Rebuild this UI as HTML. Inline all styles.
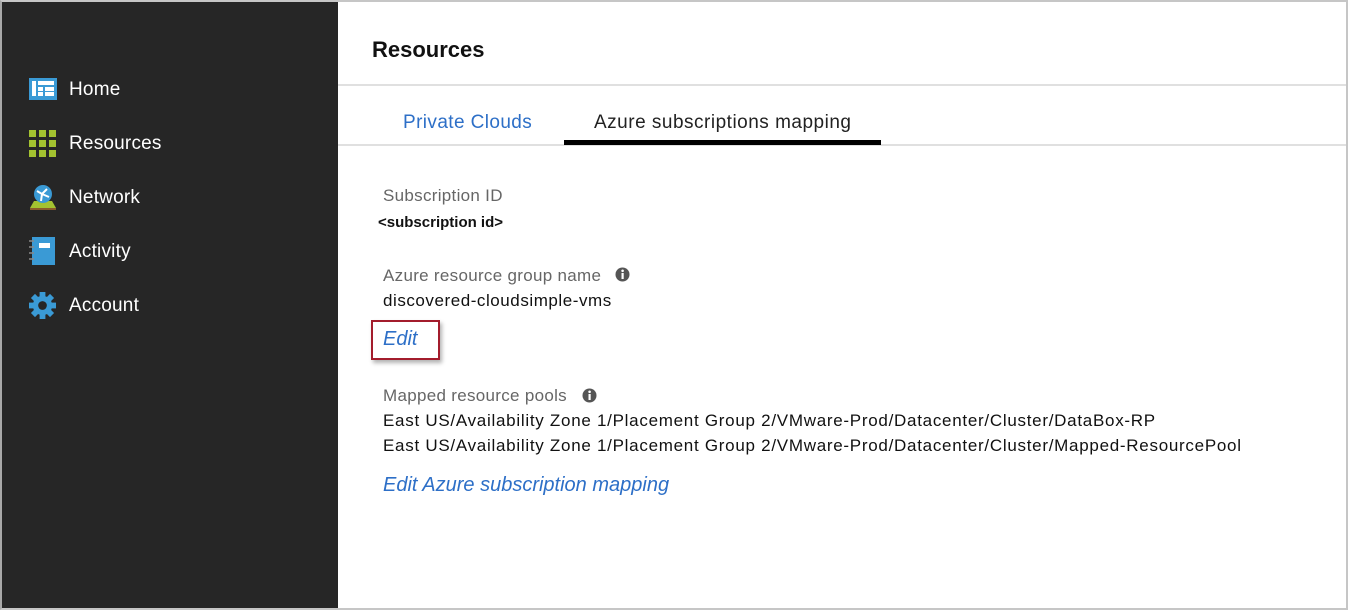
<!DOCTYPE html>
<html><head><style>
*{margin:0;padding:0;box-sizing:border-box}
body{width:1348px;height:610px;overflow:hidden;background:#fff;font-family:"Liberation Sans",sans-serif;position:relative}
.frame{position:absolute;left:0;top:0;width:1348px;height:610px;border:2px solid #c6c6c6;border-left-color:#a8a8a8;pointer-events:none}
.side{position:absolute;left:2px;top:2px;width:336px;height:606px;background:#262626}
.nav{position:absolute;left:69px;color:#fff;font-size:19px;letter-spacing:0.2px}
.ic{position:absolute;left:29px}
.t{position:absolute;white-space:nowrap}
</style></head><body>
<div class="side"></div>
<svg class="ic" style="top:78px" width="28" height="22"><rect width="28" height="22" fill="#3a9ad5"/><rect x="3" y="3" width="4" height="15" fill="#fff"/><rect x="9" y="3" width="16" height="4" fill="#fff"/><rect x="9" y="9" width="5" height="4" fill="#fff"/><rect x="16" y="9" width="9" height="4" fill="#fff"/><rect x="9" y="14" width="5" height="4" fill="#fff"/><rect x="16" y="14" width="9" height="4" fill="#fff"/></svg>
<div class="nav t" style="top:79px">Home</div>
<svg class="ic" style="top:130px" width="27" height="27" fill="#a3c230"><rect x="0" y="0" width="7" height="7"/><rect x="10" y="0" width="7" height="7"/><rect x="20" y="0" width="7" height="7"/><rect x="0" y="10" width="7" height="7"/><rect x="10" y="10" width="7" height="7"/><rect x="20" y="10" width="7" height="7"/><rect x="0" y="20" width="7" height="7"/><rect x="10" y="20" width="7" height="7"/><rect x="20" y="20" width="7" height="7"/></svg>
<div class="nav t" style="top:133px">Resources</div>
<svg class="ic" style="top:183px" width="28" height="27"><polygon points="5,18 23,18 27,25 1,25" fill="#a3c230"/><rect x="1" y="25" width="26" height="2" fill="#8a5a2a"/><circle cx="14" cy="11" r="9" fill="#3a9ad5"/><path d="M8 8 L13 11 L18 6 M13 11 L12 18 M13 11 L20 14" stroke="#fff" stroke-width="2" fill="none"/></svg>
<div class="nav t" style="top:187px">Network</div>
<svg class="ic" style="top:237px" width="27" height="28"><rect x="3" y="0" width="23" height="28" fill="#3a9ad5"/><rect x="10" y="6" width="11" height="5" fill="#fff"/><g stroke="#888" stroke-width="1.5"><line x1="0" y1="4" x2="5" y2="4"/><line x1="0" y1="10" x2="5" y2="10"/><line x1="0" y1="16" x2="5" y2="16"/><line x1="0" y1="22" x2="5" y2="22"/></g></svg>
<div class="nav t" style="top:241px">Activity</div>
<svg class="ic" style="top:292px" width="27" height="27" viewBox="-14 -14 28 28"><g fill="#3a9ad5"><circle r="10"/><g id="tt"><rect x="-3" y="-14" width="6" height="6"/></g><use href="#tt" transform="rotate(45)"/><use href="#tt" transform="rotate(90)"/><use href="#tt" transform="rotate(135)"/><use href="#tt" transform="rotate(180)"/><use href="#tt" transform="rotate(225)"/><use href="#tt" transform="rotate(270)"/><use href="#tt" transform="rotate(315)"/></g><circle r="4.5" fill="#262626"/></svg>
<div class="nav t" style="top:295px">Account</div>

<div class="t" style="left:372px;top:37px;font-size:22px;font-weight:bold;color:#111">Resources</div>
<div style="position:absolute;left:338px;top:84px;width:1008px;height:2px;background:#e0e0e0"></div>
<div class="t" style="left:403px;top:112px;font-size:19px;color:#2d6fc7;letter-spacing:0.4px">Private Clouds</div>
<div class="t" style="left:594px;top:112px;font-size:19px;color:#222;letter-spacing:0.5px">Azure subscriptions mapping</div>
<div style="position:absolute;left:338px;top:144px;width:1008px;height:2px;background:#e0e0e0"></div>
<div style="position:absolute;left:564px;top:140px;width:317px;height:5px;background:#000"></div>

<div class="t" style="left:383px;top:186px;font-size:17px;color:#666;letter-spacing:0.3px">Subscription ID</div>
<div class="t" style="left:378px;top:214px;font-size:15px;font-weight:bold;color:#111">&lt;subscription id&gt;</div>
<div class="t" style="left:383px;top:266px;font-size:17px;color:#666;letter-spacing:0.3px">Azure resource group name</div>
<svg style="position:absolute;left:615px;top:267px" width="15" height="15"><circle cx="7.5" cy="7.5" r="7" fill="#555"/><rect x="6.5" y="6" width="2.2" height="6" fill="#fff"/><circle cx="7.6" cy="3.8" r="1.3" fill="#fff"/></svg>
<div class="t" style="left:383px;top:291px;font-size:17px;color:#111;letter-spacing:0.55px">discovered-cloudsimple-vms</div>
<div style="position:absolute;left:371px;top:320px;width:69px;height:40px;border:2px solid #a31c2c;box-shadow:2px 3px 4px rgba(0,0,0,0.3)"></div>
<div class="t" style="left:383px;top:328px;font-size:20px;font-style:italic;color:#2d6fc7">Edit</div>
<div class="t" style="left:383px;top:386px;font-size:17px;color:#666;letter-spacing:0.3px">Mapped resource pools</div>
<svg style="position:absolute;left:582px;top:388px" width="15" height="15"><circle cx="7.5" cy="7.5" r="7" fill="#555"/><rect x="6.5" y="6" width="2.2" height="6" fill="#fff"/><circle cx="7.6" cy="3.8" r="1.3" fill="#fff"/></svg>
<div class="t" style="left:383px;top:411px;font-size:17px;color:#111;letter-spacing:0.72px">East US/Availability Zone 1/Placement Group 2/VMware-Prod/Datacenter/Cluster/DataBox-RP</div>
<div class="t" style="left:383px;top:436px;font-size:17px;color:#111;letter-spacing:0.72px">East US/Availability Zone 1/Placement Group 2/VMware-Prod/Datacenter/Cluster/Mapped-ResourcePool</div>
<div class="t" style="left:383px;top:474px;font-size:20px;font-style:italic;color:#2d6fc7">Edit Azure subscription mapping</div>
<div class="frame"></div>
</body></html>
